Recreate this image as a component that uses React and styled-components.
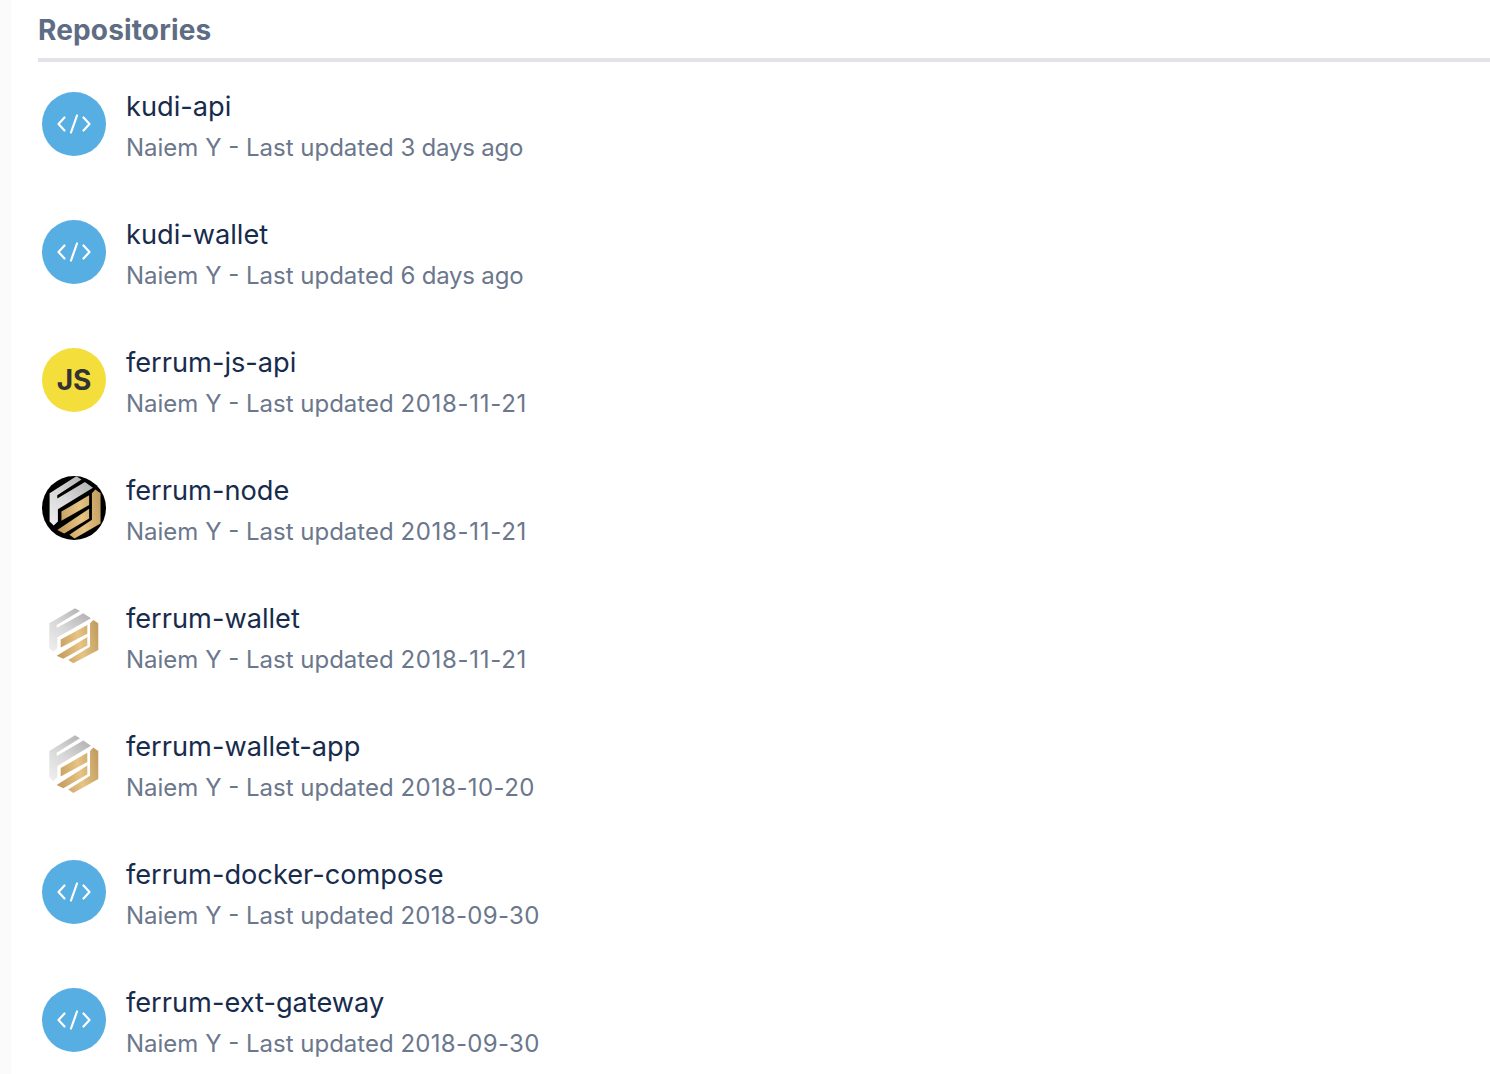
import React from 'react'
import styled, { createGlobalStyle } from 'styled-components'

// spacing makes up for the wider digit widths of the original font
const repos = [
  { name: 'kudi-api', updated: '3 days ago', kind: 'code', spacing: -0.2 },
  { name: 'kudi-wallet', updated: '6 days ago', kind: 'code', spacing: -0.2 },
  { name: 'ferrum-js-api', updated: '2018-11-21', kind: 'js', spacing: 0.7 },
  { name: 'ferrum-node', updated: '2018-11-21', kind: 'dark', spacing: 0.7 },
  { name: 'ferrum-wallet', updated: '2018-11-21', kind: 'logo', spacing: 0.7 },
  { name: 'ferrum-wallet-app', updated: '2018-10-20', kind: 'tall', spacing: 0.4 },
  { name: 'ferrum-docker-compose', updated: '2018-09-30', kind: 'code', spacing: 0.3 },
  { name: 'ferrum-ext-gateway', updated: '2018-09-30', kind: 'code', spacing: 0.3 },
]

function LogoShapes({ id }) {
  return (
    <>
      <defs>
        <linearGradient id={`silver-${id}`} gradientUnits="userSpaceOnUse" x1="10" y1="42" x2="40" y2="2">
          <stop offset="0" stopColor="#ededed" />
          <stop offset="0.5" stopColor="#d8d8d8" />
          <stop offset="1" stopColor="#b4b4b6" />
        </linearGradient>
        <linearGradient id={`gold-${id}`} gradientUnits="userSpaceOnUse" x1="14" y1="40" x2="57" y2="30">
          <stop offset="0" stopColor="#c29a5c" />
          <stop offset="0.55" stopColor="#e6c484" />
          <stop offset="1" stopColor="#c49f63" />
        </linearGradient>
      </defs>
      <polygon
        fill={`url(#silver-${id})`}
        points="7.3,15.3 33,0.3 38,3 14.7,17 14.7,20 41.3,5.3 49,10.3 15.3,29.5 15.3,40.3 11.3,43.7 7.3,40.3"
      />
      <polygon fill={`url(#gold-${id})`} points="18.7,31.5 45.3,17 45.3,25.7 18.7,39.5" />
      <polygon fill={`url(#gold-${id})`} points="14.7,47.7 45.3,29 45.3,37.5 21.3,50.8" />
      <polygon
        fill={`url(#gold-${id})`}
        points="26.3,52 48,38.7 48,15.3 51.3,12 56.3,15.3 56.3,42 31.3,55.3"
      />
    </>
  )
}

function RepoIcon({ kind, id }) {
  if (kind === 'code') {
    return (
      <CodeBadge>
        <svg width="34" height="20" viewBox="0 0 34 20" fill="none" stroke="#fff" strokeWidth="2.2" strokeLinecap="round" strokeLinejoin="round">
          <polyline points="7.5,3.5 1.5,10 7.5,16.5" />
          <line x1="20" y1="1.5" x2="14" y2="18.5" />
          <polyline points="26.5,3.5 32.5,10 26.5,16.5" />
        </svg>
      </CodeBadge>
    )
  }
  if (kind === 'js') return <JsBadge>JS</JsBadge>
  if (kind === 'dark') {
    return (
      <DarkBadge>
        <svg width="64" height="64" viewBox="0 0 64 64">
          <g transform="translate(0,0) scale(1.04,1.13)">
            <LogoShapes id={id} />
          </g>
        </svg>
      </DarkBadge>
    )
  }
  return (
    <PlainBadge>
      <svg width="64" height="64" viewBox="0 0 64 64">
        <g transform={kind === 'tall' ? 'translate(0,3) scale(1,1.05)' : 'translate(0,4)'}>
          <LogoShapes id={id} />
        </g>
      </svg>
    </PlainBadge>
  )
}

export default function App() {
  return (
    <>
      <GlobalStyle />
      <Page>
        <Title>Repositories</Title>
        <RepoList>
          {repos.map((repo) => (
            <RepoRow key={repo.name}>
              <RepoIcon kind={repo.kind} id={repo.name} />
              <RepoText>
                <RepoName>{repo.name}</RepoName>
                <RepoMeta>
                  Naiem Y - Last updated <Updated $spacing={repo.spacing}>{repo.updated}</Updated>
                </RepoMeta>
              </RepoText>
            </RepoRow>
          ))}
        </RepoList>
      </Page>
    </>
  )
}

const GlobalStyle = createGlobalStyle`
  html, body {
    margin: 0;
    padding: 0;
    background: #fff;
    overflow: hidden;
  }
  body {
    font-family: Inter, "Liberation Sans", sans-serif;
  }
`

const Page = styled.div`
  width: 1490px;
  height: 1074px;
  padding: 0 0 0 38px;
  box-sizing: border-box;
  overflow: hidden;
  background: linear-gradient(to right, #fbfbfc 0, #fbfbfc 11px, #fff 12px);
`

const Title = styled.h2`
  margin: 0;
  height: 62px;
  padding-top: 13px;
  box-sizing: border-box;
  border-bottom: 4px solid #e2e3ea;
  font-size: 28px;
  line-height: 34px;
  font-weight: 700;
  letter-spacing: 0.15px;
  color: #5e6c84;
`

const RepoList = styled.div`
  display: flex;
  flex-direction: column;
  gap: 64px;
  padding: 30px 0 0 4px;
`

const RepoRow = styled.div`
  display: flex;
  gap: 20px;
  height: 64px;
`

const Badge = styled.div`
  width: 64px;
  height: 64px;
  flex: none;
  border-radius: 50%;
  display: flex;
  align-items: center;
  justify-content: center;
  overflow: hidden;
`

const CodeBadge = styled(Badge)`
  background: #57aee2;
`

const JsBadge = styled(Badge)`
  background: #f4de3c;
  color: #333;
  font-size: 28px;
  font-weight: 700;
`

const DarkBadge = styled(Badge)`
  background: #000;
`

const PlainBadge = styled(Badge)`
  background: transparent;
  border-radius: 0;
`

const RepoText = styled.div`
  display: flex;
  flex-direction: column;
  margin-top: -2px;
`

const RepoName = styled.div`
  font-size: 27.2px;
  line-height: 34px;
  color: #172b4d;
`

const RepoMeta = styled.div`
  margin-top: 9px;
  font-size: 24px;
  line-height: 30px;
  color: #6b778c;
`

const Updated = styled.span`
  letter-spacing: ${(p) => p.$spacing}px;
`
